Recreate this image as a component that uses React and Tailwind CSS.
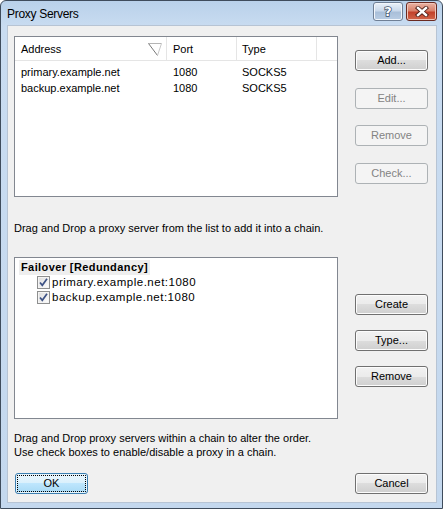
import React from 'react';

const servers = [
  { address: 'primary.example.net', port: '1080', type: 'SOCKS5' },
  { address: 'backup.example.net', port: '1080', type: 'SOCKS5' },
];

const chainItems = ['primary.example.net:1080', 'backup.example.net:1080'];

function WinButton({ children, disabled, isDefault, className = '' }) {
  let look =
    'border-[#707070] bg-[linear-gradient(#f2f2f2_0%,#ebebeb_50%,#dddddd_50%,#cfcfcf_100%)] shadow-[inset_0_0_0_1px_#fcfcfc] text-black';
  if (disabled) look = 'border-[#adb2b5] bg-[#f4f4f4] text-[#838383]';
  if (isDefault)
    look =
      'border-[#3c7fb1] bg-[linear-gradient(#eaf6fd_0%,#d9f0fc_50%,#bee6fd_50%,#a7d9f5_100%)] shadow-[inset_0_0_0_1px_#e6f4fc] text-black outline-1 outline-dotted outline-black -outline-offset-3';
  return (
    <button
      type="button"
      disabled={disabled}
      className={`w-[73px] h-[21px] rounded-[3px] border flex items-center justify-center text-[11px] leading-none ${look} ${className}`}
    >
      {children}
    </button>
  );
}

function CheckBox() {
  return (
    <span className="w-[13px] h-[13px] shrink-0 border border-[#8e8f8f] bg-[linear-gradient(135deg,#dcdcdc,#ffffff)] shadow-[inset_0_0_0_1px_#f4f4f4] flex items-center justify-center">
      <svg width="11" height="11" viewBox="0 0 11 11">
        <path d="M2 5.5 L4.3 8.3 L9 1.8" fill="none" stroke="#3d5285" strokeWidth="1.7" />
      </svg>
    </span>
  );
}

export default function App() {
  return (
    <div className="w-[443px] h-[509px] font-['Liberation_Sans',Arial,sans-serif] text-[11px] text-black">
      {/* Window frame */}
      <div className="w-full h-full flex flex-col border border-[#3f4c5c] rounded-t-[6px] bg-[linear-gradient(#b9d1ea,#c9dcf1_26px,#c4d8ee)] pl-[6px] pr-[5px] pb-[5px]">
        {/* Title bar */}
        <div className="h-[24px] flex items-start justify-between">
          <span className="mt-[6px] text-[12px] tracking-[-0.3px] leading-[14px] text-black">Proxy Servers</span>
          <div className="flex gap-[3px] pt-[1px]">
            <div className="w-[30px] h-[19px] rounded-[3px] border border-[#6f7f95] bg-[linear-gradient(#eaf1f9_0%,#cad9eb_45%,#a9bfd9_55%,#b9cde4_100%)] shadow-[inset_0_0_0_1px_#f2f6fb] flex items-center justify-center">
              <span className="font-['DejaVu_Sans',sans-serif] font-bold text-[13px] leading-none text-white [-webkit-text-stroke:1.5px_#3d4f69] [paint-order:stroke_fill]">?</span>
            </div>
            <div className="w-[31px] h-[19px] rounded-[3px] border border-[#6a2a21] bg-[linear-gradient(#eab3a4_0%,#d9816b_45%,#c2422b_55%,#d2664a_100%)] shadow-[inset_0_0_0_1px_#f0c5b9] flex items-center justify-center">
              <svg width="14" height="11" viewBox="0 0 14 11">
                <path d="M3 2 L11 9 M11 2 L3 9" stroke="#4a1d16" strokeWidth="4.2" strokeLinecap="square" />
                <path d="M3 2 L11 9 M11 2 L3 9" stroke="#ffffff" strokeWidth="2.4" strokeLinecap="square" />
              </svg>
            </div>
          </div>
        </div>

        {/* Client area */}
        <div className="flex-1 border border-[#b7c4d4] bg-[#f0f0f0] pl-[6px] pt-[10px]">
          {/* Proxy list */}
          <div className="flex items-start">
            <div className="w-[324px] h-[161px] border border-[#828790] bg-white">
              <div className="h-[24px] flex border-b border-[#e5e5e5]">
                <div className="w-[152px] border-r border-[#e5e5e5] pl-[6px] pt-[2px] flex items-center justify-between">
                  <span>Address</span>
                  <svg className="self-start mt-[4px] mr-[4px]" width="14" height="13" viewBox="0 0 14 13">
                    <path d="M0.5 0.5 H13.5" stroke="#b5b5b5" strokeWidth="1" />
                    <path d="M0.5 0.5 L9.5 12.5" stroke="#777777" strokeWidth="1" />
                    <path d="M13.5 0.5 L9.5 12.5" stroke="#c8c8c8" strokeWidth="1" />
                  </svg>
                </div>
                <div className="w-[70px] border-r border-[#e5e5e5] pl-[6px] pt-[2px] flex items-center">Port</div>
                <div className="w-[80px] border-r border-[#e5e5e5] pl-[5px] pt-[2px] flex items-center">Type</div>
                <div className="flex-1" />
              </div>
              <div className="mt-[3px]">
                {servers.map((s) => (
                  <div key={s.address} className="h-[16px] flex items-center">
                    <span className="w-[152px] pl-[6px]">{s.address}</span>
                    <span className="w-[70px] pl-[6px]">{s.port}</span>
                    <span className="pl-[5px]">{s.type}</span>
                  </div>
                ))}
              </div>
            </div>

            <div className="ml-[17px] pt-[14px] flex flex-col">
              <WinButton>Add...</WinButton>
              <WinButton disabled className="mt-[17px]">Edit...</WinButton>
              <WinButton disabled className="mt-[16px]">Remove</WinButton>
              <WinButton disabled className="mt-[17px]">Check...</WinButton>
            </div>
          </div>

          <p className="mt-[24px] leading-[14px]">
            Drag and Drop a proxy server from the list to add it into a chain.
          </p>

          {/* Chain list */}
          <div className="mt-[22px] flex items-start">
            <div className="w-[324px] h-[162px] border border-[#828790] bg-white pl-[4px] pt-[2px]">
              <div className="h-[15px] w-fit bg-[#eeeeee] px-[2px] flex items-center font-bold tracking-[0.4px]">
                Failover [Redundancy]
              </div>
              {chainItems.map((item) => (
                <div key={item} className="h-[15px] flex items-center pl-[18px] gap-[2px]">
                  <CheckBox />
                  <span className="text-[11.5px] tracking-[0.5px]">{item}</span>
                </div>
              ))}
            </div>

            <div className="ml-[17px] pt-[37px] flex flex-col">
              <WinButton>Create</WinButton>
              <WinButton className="mt-[15px]">Type...</WinButton>
              <WinButton className="mt-[15px]">Remove</WinButton>
            </div>
          </div>

          <p className="mt-[12px] leading-[14px]">
            Drag and Drop proxy servers within a chain to alter the order.
            <br />
            Use check boxes to enable/disable a proxy in a chain.
          </p>

          {/* Dialog buttons */}
          <div className="mt-[14px] flex">
            <WinButton isDefault className="ml-[1px]">OK</WinButton>
            <WinButton className="ml-[267px]">Cancel</WinButton>
          </div>
        </div>
      </div>
    </div>
  );
}
